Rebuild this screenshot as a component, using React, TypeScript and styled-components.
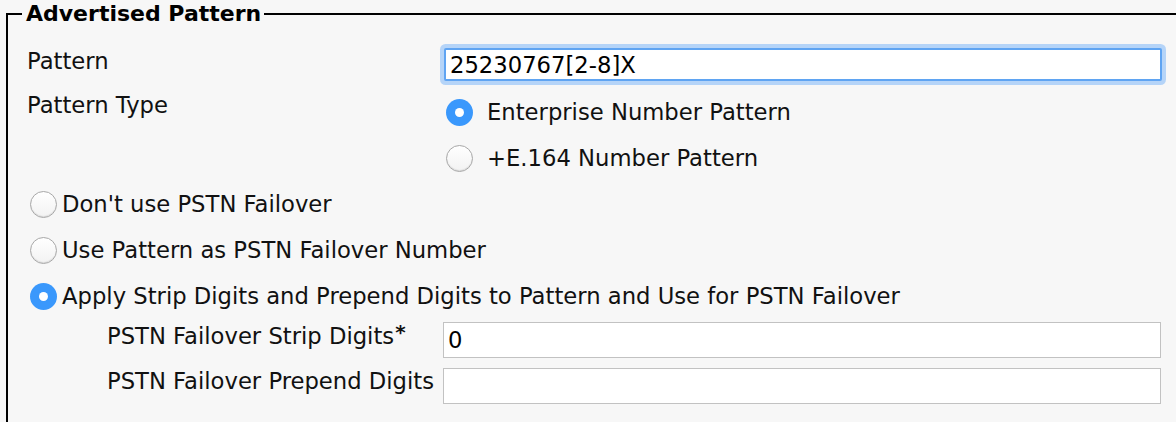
import React from "react";
import styled, { createGlobalStyle } from "styled-components";

const GlobalStyle = createGlobalStyle`
  html, body {
    margin: 0;
    padding: 0;
    background: #f7f7f7;
    overflow: hidden;
  }
  body {
    font-family: "DejaVu Sans", Verdana, sans-serif;
    color: #111;
  }
`;

const Page = styled.div`
  width: 1176px;
  height: 422px;
  padding-left: 6px;
  box-sizing: border-box;
  overflow: hidden;
`;

const Frame = styled.fieldset`
  margin: 0;
  width: 1190px;
  min-height: 460px;
  box-sizing: border-box;
  border: 2px solid #000;
  padding: 0;
`;

const Legend = styled.legend`
  margin-left: 14px;
  padding: 0 3px 0 4px;
  font-weight: bold;
  font-size: 22px;
  line-height: 28px;
  color: #000;
`;

const Row = styled.div<{ $height: number; $indent: number }>`
  display: flex;
  align-items: flex-start;
  height: ${(p) => p.$height}px;
  padding-left: ${(p) => p.$indent}px;
`;

const Label = styled.div<{ $width: number; $top: number }>`
  width: ${(p) => p.$width}px;
  flex-shrink: 0;
  margin-top: ${(p) => p.$top}px;
  font-size: 22.7px;
  line-height: 28px;
  white-space: nowrap;
`;

const Star = styled.sup`
  font-weight: bold;
  font-size: 20px;
  line-height: 0;
  margin-left: 1px;
  position: relative;
  top: 4px;
`;

const TextBox = styled.input<{ $focused?: boolean; $top: number }>`
  box-sizing: border-box;
  width: 718px;
  height: ${(p) => (p.$focused ? 33 : 36)}px;
  margin-top: ${(p) => p.$top}px;
  padding: 0 4px;
  font-family: "DejaVu Sans", Verdana, sans-serif;
  font-size: 22.7px;
  color: #000;
  background: #fff;
  outline: none;
  border: ${(p) => (p.$focused ? "2px solid #5fa4f2" : "1px solid #c2c2c2")};
  border-radius: ${(p) => (p.$focused ? "2px" : "0")};
  box-shadow: ${(p) =>
    p.$focused ? "0 0 0 4px rgba(128, 184, 250, 0.55)" : "none"};
`;

const Options = styled.div<{ $top: number }>`
  display: flex;
  flex-direction: column;
  margin-top: ${(p) => p.$top}px;
`;

const Option = styled.label<{ $gap: number }>`
  display: flex;
  align-items: center;
  height: 46px;
  gap: ${(p) => p.$gap}px;
  font-size: 22.7px;
  white-space: nowrap;
  cursor: pointer;
`;

const Radio = styled.span<{ $checked?: boolean }>`
  width: 27px;
  height: 27px;
  box-sizing: border-box;
  border-radius: 50%;
  flex-shrink: 0;
  display: flex;
  align-items: center;
  justify-content: center;
  background: ${(p) =>
    p.$checked ? "#3a98fc" : "linear-gradient(#ffffff, #f2f2f2)"};
  border: ${(p) => (p.$checked ? "none" : "1px solid #a8a8a8")};
  box-shadow: ${(p) =>
    p.$checked ? "none" : "inset 0 -1px 1px rgba(0,0,0,0.1)"};

  &::after {
    content: "";
    display: ${(p) => (p.$checked ? "block" : "none")};
    width: 9px;
    height: 9px;
    border-radius: 50%;
    background: #fff;
  }
`;

const Stack = styled.div`
  display: flex;
  flex-direction: column;
  padding-left: 22px;
`;

export default function App() {
  return (
    <>
      <GlobalStyle />
      <Page>
        <Frame>
          <Legend>Advertised Pattern</Legend>
          <Row $height={45} $indent={19} style={{ marginTop: 16 }}>
            <Label $width={417} $top={3}>Pattern</Label>
            <TextBox $focused $top={4} defaultValue="25230767[2-8]X" />
          </Row>
          <Row $height={92} $indent={19}>
            <Label $width={419} $top={2}>Pattern Type</Label>
            <Options $top={0}>
              <Option $gap={14}>
                <Radio $checked />
                Enterprise Number Pattern
              </Option>
              <Option $gap={14}>
                <Radio />
                +E.164 Number Pattern
              </Option>
            </Options>
          </Row>
          <Stack>
            <Option $gap={5}>
              <Radio />
              Don't use PSTN Failover
            </Option>
            <Option $gap={5}>
              <Radio />
              Use Pattern as PSTN Failover Number
            </Option>
            <Option $gap={5}>
              <Radio $checked />
              Apply Strip Digits and Prepend Digits to Pattern and Use for PSTN
              Failover
            </Option>
          </Stack>
          <Row $height={46} $indent={99}>
            <Label $width={336} $top={3}>
              PSTN Failover Strip Digits<Star>*</Star>
            </Label>
            <TextBox $top={3} defaultValue="0" />
          </Row>
          <Row $height={46} $indent={99}>
            <Label $width={336} $top={2}>PSTN Failover Prepend Digits</Label>
            <TextBox $top={3} defaultValue="" />
          </Row>
        </Frame>
      </Page>
    </>
  );
}
